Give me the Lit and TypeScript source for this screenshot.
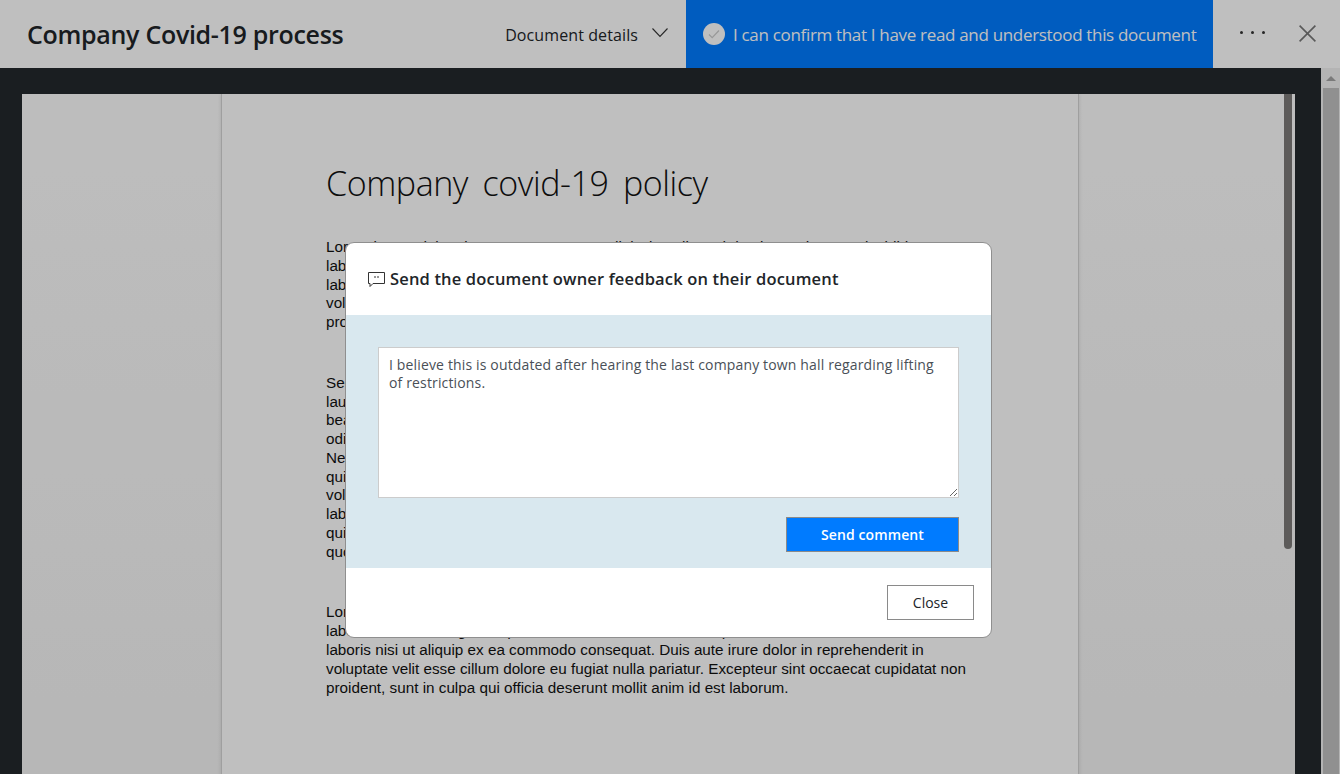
import { LitElement, html, css } from "lit";
import { customElement } from "lit/decorators.js";

const P1 = "Lorem ipsum dolor sit amet, consectetur adipiscing elit, sed do eiusmod tempor incididunt ut labore et dolore magna aliqua. Ut enim ad minim veniam, quis nostrud exercitation ullamco laboris nisi ut aliquip ex ea commodo consequat. Duis aute irure dolor in reprehenderit in voluptate velit esse cillum dolore eu fugiat nulla pariatur. Excepteur sint occaecat cupidatat non proident, sunt in culpa qui officia deserunt mollit anim id est laborum.";
const P2 = "Sed ut perspiciatis unde omnis iste natus error sit voluptatem accusantium doloremque laudantium, totam rem aperiam, eaque ipsa quae ab illo inventore veritatis et quasi architecto beatae vitae dicta sunt explicabo. Nemo enim ipsam voluptatem quia voluptas sit aspernatur aut odit aut fugit, sed quia consequuntur magni dolores eos qui ratione voluptatem sequi nesciunt. Neque porro quisquam est, qui dolorem ipsum quia dolor sit amet, consectetur, adipisci velit, sed quia non numquam eius modi tempora incidunt ut labore et dolore magnam aliquam quaerat voluptatem. Ut enim ad minima veniam, quis nostrum exercitationem ullam corporis suscipit laboriosam, nisi ut aliquid ex ea commodi consequatur? Quis autem vel eum iure reprehenderit qui in ea voluptate velit esse quam nihil molestiae consequatur, vel illum qui dolorem eum fugiat quo voluptas nulla pariatur?";

@customElement("app-root")
export class AppRoot extends LitElement {
  static styles = css`
    :host { display: block; width: 1340px; height: 774px; position: relative; overflow: hidden; font-family: "Open Sans", "Noto Sans", sans-serif; }
    .app { display: flex; flex-direction: column; width: 1340px; height: 774px; background: #fff; }
    .head { height: 68px; display: flex; align-items: center; background: #fff; flex: none; }
    .title { font-size: 25px; font-weight: 600; color: #212529; margin-left: 27px; letter-spacing: -0.3px; flex: 1; padding-bottom: 1px; white-space: nowrap; }
    .details { display: flex; align-items: center; gap: 14px; font-size: 16px; color: #212529; margin-right: 18px; letter-spacing: 0.1px; white-space: nowrap; padding-top: 1px; }
    .chev { margin-bottom: 4px; }
    .confirm { width: 527px; height: 68px; background: #007bff; display: flex; align-items: center; color: #fff; font-size: 17px; letter-spacing: -0.32px; padding-left: 17px; box-sizing: border-box; gap: 8px; white-space: nowrap; flex: none; }
    .tick { width: 22px; height: 22px; border-radius: 50%; background: #fff; display: flex; align-items: center; justify-content: center; flex: none; }
    .more { width: 78px; flex: none; display: flex; justify-content: center; gap: 8px; margin-bottom: 4px; }
    .more i { width: 3px; height: 3px; border-radius: 50%; background: #333; }
    .x { width: 17px; height: 17px; margin-left: 8px; margin-right: 24px; margin-bottom: 1px; flex: none; }
    .below { flex: 1; min-height: 0; display: flex; }
    .main { flex: 1; background: #23282c; padding: 26px 26px 0 22px; min-width: 0; display: flex; }
    .viewer { flex: 1; background: linear-gradient(#fdfdfd, #f4f4f4); display: flex; position: relative; overflow: hidden; }
    .sheet { width: 858px; flex: none; margin-left: 199px; box-sizing: border-box; background: #fff; border-left: 1px solid #d4d4d4; border-right: 1px solid #d4d4d4; padding: 67px 0 0 104px; height: 800px; box-shadow: 0 0 4px rgba(0,0,0,.12); }
    h1 { margin: 0 0 33px; font: 300 34px/44px "Open Sans", sans-serif; color: #111; word-spacing: 6px; letter-spacing: -0.42px; white-space: nowrap; }
    .sheet p { margin: 0 0 42px; width: 658px; font: 15.25px/18.77px "Liberation Sans", Arial, sans-serif; color: #111; }
    .thumb { position: absolute; right: 3px; top: 0; width: 8px; height: 455px; background: #7c7a78; border-radius: 0 0 4px 4px; }
    .sb { width: 19px; flex: none; background: #f1f1f1; display: flex; flex-direction: column; align-items: flex-start; padding-left: 2px; box-sizing: border-box; }
    .sbarrow { height: 20px; width: 16px; display: flex; align-items: flex-start; justify-content: center; padding-top: 8px; box-sizing: border-box; flex: none; }
    .sbthumb { width: 16px; flex: 1; background: #c1c1c1; }
    .scrim { position: absolute; inset: 0; background: rgba(0,0,0,.25); }
    .dialog { position: absolute; left: 345px; top: 242px; width: 647px; height: 396px; box-sizing: border-box; background: #fff; border: 1px solid #8f8f8f; border-radius: 9px; overflow: hidden; display: flex; flex-direction: column; }
    .dh { height: 72px; box-sizing: border-box; flex: none; display: flex; align-items: center; padding: 0 0 2px 21px; gap: 4px; font-size: 16.5px; font-weight: 600; color: #212529; letter-spacing: 0.16px; white-space: nowrap; }
    .dh svg { margin-top: 2px; }
    .db { height: 253px; flex: none; background: #d9e8ef; padding: 32px 32px 0 33px; box-sizing: border-box; display: flex; flex-direction: column; align-items: flex-end; }
    textarea { width: 581px; height: 151px; box-sizing: border-box; border: 1px solid #ccc; background: #fff; padding: 8px 10px; margin: 0; resize: vertical; font: 14px/18px "Open Sans", sans-serif; color: #495057; letter-spacing: 0.15px; outline: none; overflow: hidden; display: block; flex: none; }
    .send { margin-top: 19px; width: 173px; height: 35px; flex: none; background: #007bff; color: #fff; border: 1px solid #8a8a8a; font: 600 14px "Open Sans", sans-serif; letter-spacing: 0.1px; padding: 0; }
    .df { flex: 1; display: flex; justify-content: flex-end; align-items: flex-start; padding: 17px 17px 0 0; }
    .close { width: 87px; height: 35px; box-sizing: border-box; background: #fff; color: #212529; border: 1px solid #8a8a8a; font: 14px "Open Sans", sans-serif; padding: 0; }
  `;

  render() {
    return html`
      <div class="app">
        <div class="head">
          <div class="title">Company Covid-19 process</div>
          <div class="details">Document details
            <svg class="chev" width="16" height="10" viewBox="0 0 16 10"><path d="M.5.5L8 8.500 15.500.5" fill="none" stroke="#333" stroke-width="1.100"/></svg>
          </div>
          <div class="confirm">
            <span class="tick"><svg width="14" height="12" viewBox="0 0 14 12"><path d="M2 6.500l3.200 3.200L12 2.500" fill="none" stroke="#ccc" stroke-width="1.200"/></svg></span>
            I can confirm that I have read and understood this document
          </div>
          <div class="more"><i></i><i></i><i></i></div>
          <svg class="x" viewBox="0 0 17 17"><path d="M.6.6l15.800 15.800M16.400.6L.6 16.400" fill="none" stroke="#777" stroke-width="1.600"/></svg>
        </div>
        <div class="below">
          <div class="main">
            <div class="viewer">
              <div class="sheet">
                <h1>Company covid-19 policy</h1>
                <p>${P1}</p>
                <p>${P2}</p>
                <p>${P1}</p>
              </div>
              <div class="thumb"></div>
            </div>
          </div>
          <div class="sb">
            <div class="sbarrow"><svg width="10" height="5" viewBox="0 0 10 5"><path d="M5 0l5 5H0z" fill="#a3a3a3"/></svg></div>
            <div class="sbthumb"></div>
          </div>
        </div>
      </div>
      <div class="scrim"></div>
      <div class="dialog">
        <div class="dh">
          <svg width="19" height="17" viewBox="0 0 19 17"><path d="M1.500 1.500h16v11H6l-3 3v-3H1.500z" fill="none" stroke="#333" stroke-width="1"/><path d="M8 5v2M11 5v2" stroke="#333" stroke-width="1"/></svg>
          Send the document owner feedback on their document
        </div>
        <div class="db">
          <textarea .value=${"I believe this is outdated after hearing the last company town hall regarding lifting of restrictions."}></textarea>
          <button class="send">Send comment</button>
        </div>
        <div class="df"><button class="close">Close</button></div>
      </div>
    `;
  }
}
